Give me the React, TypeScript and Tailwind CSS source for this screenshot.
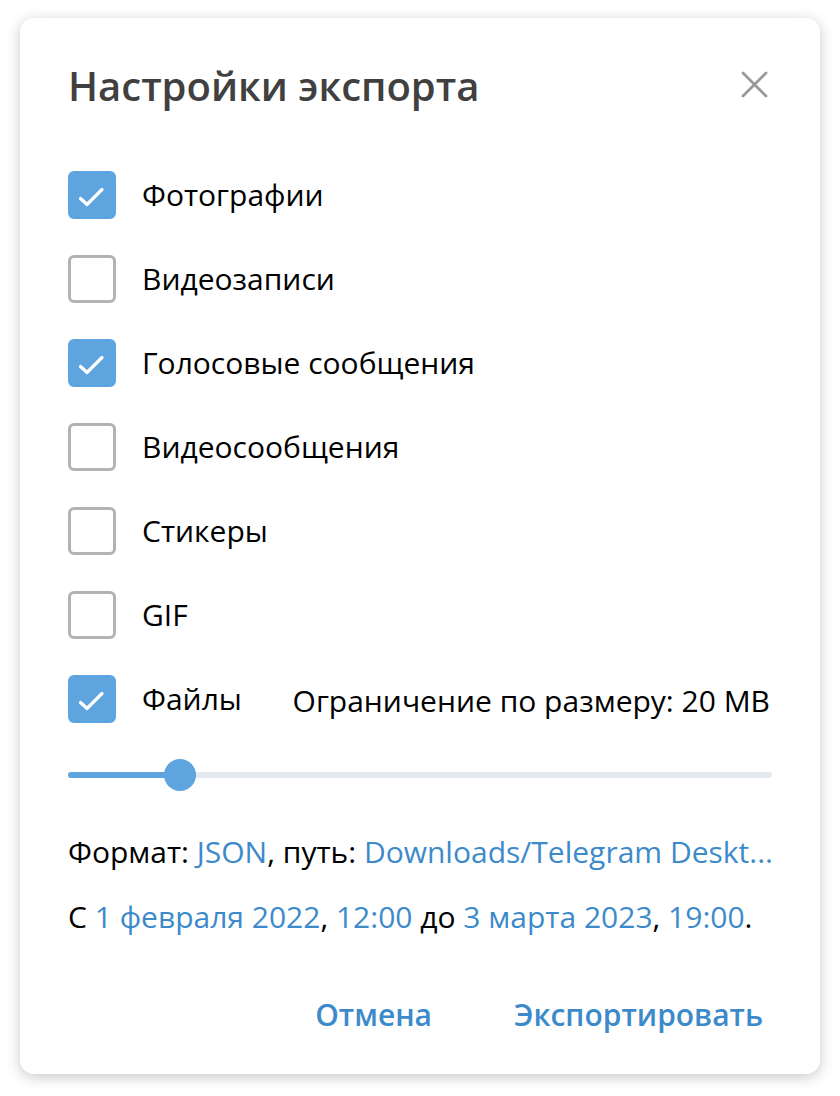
import React from 'react'

type Option = { label: string; checked: boolean }

const options: Option[] = [
  { label: 'Фотографии', checked: true },
  { label: 'Видеозаписи', checked: false },
  { label: 'Голосовые сообщения', checked: true },
  { label: 'Видеосообщения', checked: false },
  { label: 'Стикеры', checked: false },
  { label: 'GIF', checked: false },
]

function Checkbox({ checked }: { checked: boolean }) {
  if (checked) {
    return (
      <div className="w-12 h-12 shrink-0 rounded-[6px] bg-[#5ea4df] flex items-center justify-center">
        <svg width="48" height="48" viewBox="0 0 48 48" fill="none">
          <path d="M12.5 27.5 L19 33.5 L34 18.5" stroke="white" strokeWidth="3.2" strokeLinecap="round" strokeLinejoin="round" />
        </svg>
      </div>
    )
  }
  return <div className="w-12 h-12 shrink-0 rounded-[6px] border-[3px] border-[#b3b3b3] bg-white" />
}

export default function App() {
  const font = { fontFamily: '"Open Sans", "Noto Sans", sans-serif' }

  return (
    <div className="w-[840px] h-[1096px] bg-white pt-[18px] px-5" style={font}>
      <div className="w-[800px] h-[1056px] bg-white rounded-[14px] shadow-[0_3px_14px_rgba(0,0,0,0.22)] flex flex-col px-12">
        {/* Header */}
        <div className="flex items-center justify-between mt-[48px] h-[40px]">
          <h1 className="text-[40px] leading-[40px] font-semibold text-[#404040]">Настройки экспорта</h1>
          <button className="mr-[3px] mt-[-4px]">
            <svg width="30" height="30" viewBox="0 0 30 30" fill="none">
              <path d="M4 4 L27 27 M27 4 L4 27" stroke="#999999" strokeWidth="2.8" strokeLinecap="round" />
            </svg>
          </button>
        </div>

        {/* Options */}
        <div className="flex flex-col gap-9 mt-[65px]">
          {options.map((o) => (
            <div key={o.label} className="flex items-center gap-[26px] h-12">
              <Checkbox checked={o.checked} />
              <span className="text-[30px] text-black leading-none">{o.label}</span>
            </div>
          ))}
          <div className="flex items-center h-12 gap-[26px]">
            <Checkbox checked />
            <span className="text-[30px] text-black leading-none">Файлы</span>
            <span className="ml-auto text-[30px] text-black leading-none mr-[2px] mt-[4px]">Ограничение по размеру: 20 MB</span>
          </div>
        </div>

        {/* Slider */}
        <div className="relative mt-[36px] h-8 flex items-center">
          <div className="w-full h-[6px] rounded-full bg-[#e4eaef]" />
          <div className="absolute left-0 h-[6px] w-[112px] rounded-full bg-[#5ea4df]" />
          <div className="absolute left-[96px] w-8 h-8 rounded-full bg-[#5ea4df]" />
        </div>

        {/* Info */}
        <div className="mt-[46px] text-[30px] text-black leading-none whitespace-nowrap">
          Формат: <span className="text-[#3d8acb]">JSON</span>, путь: <span className="text-[#3d8acb]">Downloads/Telegram Deskt...</span>
        </div>
        <div className="mt-[35px] text-[30px] text-black leading-none whitespace-nowrap">
          С <span className="text-[#3d8acb]">1 февраля 2022</span>, <span className="text-[#3d8acb]">12:00</span> до{' '}
          <span className="text-[#3d8acb]">3 марта 2023</span>, <span className="text-[#3d8acb]">19:00</span>.
        </div>

        {/* Buttons */}
        <div className="flex justify-end gap-[82px] mt-[68px] mr-[9px]">
          <button className="text-[30px] font-semibold text-[#3d8acb] leading-none">Отмена</button>
          <button className="text-[30px] font-semibold text-[#3d8acb] leading-none">Экспортировать</button>
        </div>
      </div>
    </div>
  )
}
